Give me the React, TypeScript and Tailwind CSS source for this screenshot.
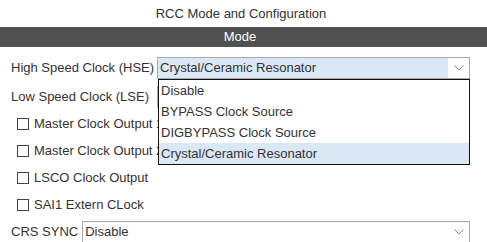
import React from "react";

const options = [
  "Disable",
  "BYPASS Clock Source",
  "DIGBYPASS Clock Source",
  "Crystal/Ceramic Resonator",
];

const checks = [
  "Master Clock Output 1",
  "Master Clock Output 2",
  "LSCO Clock Output",
  "SAI1 Extern CLock",
];

function Chevron() {
  return (
    <svg width="10" height="6" viewBox="0 0 10 6" className="shrink-0">
      <path d="M0.5 0.5 L5 5 L9.5 0.5" fill="none" stroke="#8a8a8a" strokeWidth="1" />
    </svg>
  );
}

export default function App() {
  return (
    <div
      className="w-[487px] h-[242px] overflow-hidden bg-white text-[13px] text-[#333333]"
      style={{ fontFamily: '"Liberation Sans", Arial, sans-serif' }}
    >
      {/* Title */}
      <div className="h-[27px] flex items-center justify-center pr-[5px]">
        RCC Mode and Configuration
      </div>

      {/* Section bar */}
      <div className="h-[20px] bg-[#505150] text-white flex items-center justify-center pr-[7px]">
        Mode
      </div>

      <div className="pl-[11px] pr-[17px]">
        {/* HSE */}
        <div className="mt-[10px] h-[22px] flex items-center">
          <span className="w-[146px] shrink-0">High Speed Clock (HSE)</span>
          <div className="relative flex-1 h-full">
            <div className="h-full flex border border-[#a9a9a9]">
              <div className="flex-1 bg-[#dae7f5] flex items-center pl-[2px]">
                Crystal/Ceramic Resonator
              </div>
              <div className="w-[21px] flex items-center justify-center">
                <Chevron />
              </div>
            </div>
            {/* Open list */}
            <div className="absolute z-10 top-[22px] left-[1px] right-0 bg-white border border-[#111111]">
              {options.map((o, i) => (
                <div
                  key={o}
                  className={`h-[21px] flex items-center pl-[2px] ${
                    i === 3 ? "bg-[#dae7f5]" : ""
                  }`}
                >
                  {o}
                </div>
              ))}
            </div>
          </div>
        </div>

        {/* LSE (its value is covered by the open list) */}
        <div className="mt-[7px] h-[22px] flex items-center">
          <span className="w-[146px] shrink-0">Low Speed Clock (LSE)</span>
          <div className="flex-1 h-full border border-[#a9a9a9]" />
        </div>

        {/* Checkboxes */}
        <div className="mt-[2px]">
          {checks.map((c) => (
            <div key={c} className="h-[27px] flex items-center pl-[6px] gap-[5px]">
              <span className="w-[12px] h-[12px] border border-[#444444] bg-white shrink-0" />
              <span className="whitespace-nowrap">{c}</span>
            </div>
          ))}
        </div>

        {/* CRS SYNC */}
        <div className="mt-[3px] h-[22px] flex items-center gap-[4px]">
          <span className="shrink-0">CRS SYNC</span>
          <div className="flex-1 h-full border border-[#a9a9a9] flex items-center pl-[2px]">
            <span className="flex-1">Disable</span>
            <div className="w-[21px] flex items-center justify-center">
              <Chevron />
            </div>
          </div>
        </div>
      </div>
    </div>
  );
}
